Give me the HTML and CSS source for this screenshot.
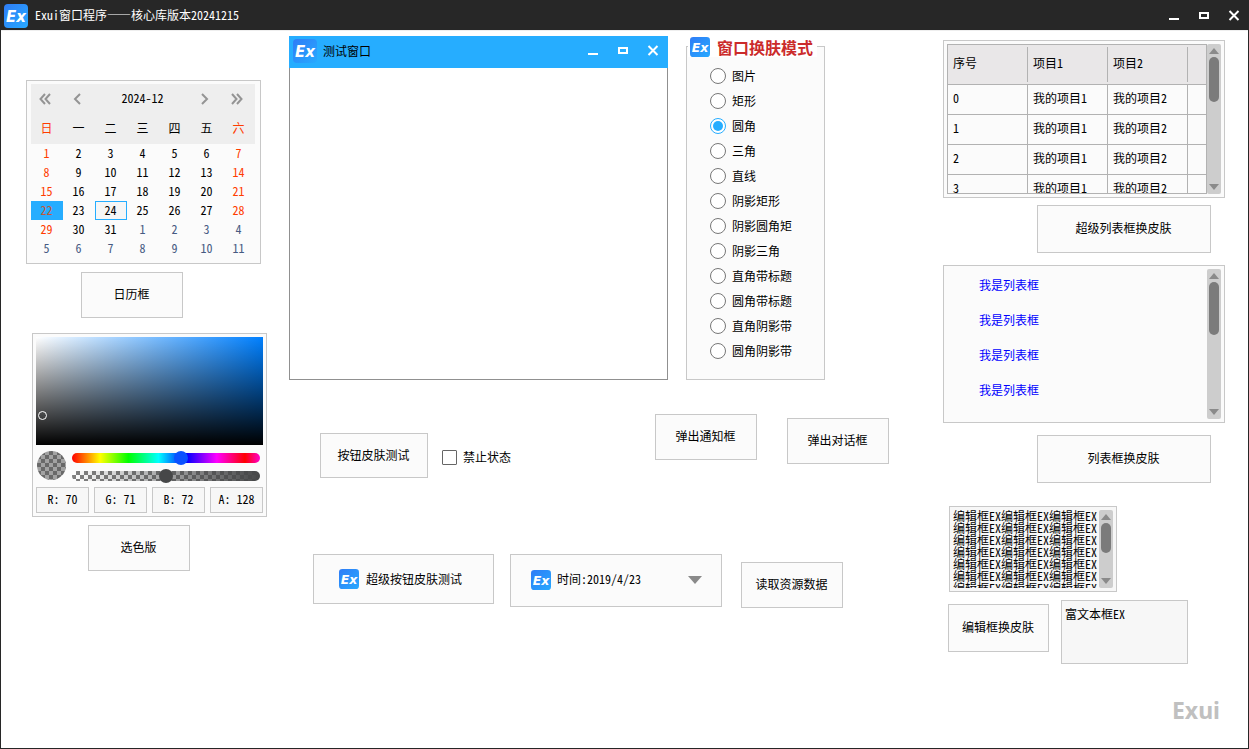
FILE: index.html
```html
<!DOCTYPE html>
<html lang="zh-CN">
<head>
<meta charset="utf-8">
<title>Exui窗口程序</title>
<link rel="stylesheet" href="styles.css">
<script src="app.js" defer></script>
</head>
<body>
<svg class="defs" aria-hidden="true">
  <defs>
    <linearGradient id="logo-fill" x1="0" y1="0" x2="1" y2="1">
      <stop offset="0" stop-color="#2f7cf6"/><stop offset="1" stop-color="#27a9ff"/>
    </linearGradient>
    <symbol id="logo" viewBox="0 0 24 24">
      <rect width="24" height="24" rx="4" fill="url(#logo-fill)"/>
      <text x="2" y="18" class="logo-text">Ex</text>
    </symbol>
    <symbol id="win-min" viewBox="0 0 12 12"><path d="M1 9h10" stroke="#fff" stroke-width="2"/></symbol>
    <symbol id="win-max" viewBox="0 0 12 12"><path d="M2 3h8v5H2z" fill="none" stroke="#fff" stroke-width="2"/></symbol>
    <symbol id="win-close" viewBox="0 0 12 12"><path d="M1.500 1l9 9m0-9l-9 9" stroke="#fff" stroke-width="2"/></symbol>
    <symbol id="tri-up" viewBox="0 0 10 6"><path d="M5 0l5 6H0z" fill="#8a8a8a"/></symbol>
    <symbol id="tri-down" viewBox="0 0 10 6"><path d="M5 6L0 0h10z" fill="#8a8a8a"/></symbol>
    <symbol id="chev" viewBox="0 0 12 12"><path d="M9 1L4 6l5 5" fill="none" stroke="#949494" stroke-width="2"/></symbol>
    <symbol id="chev2" viewBox="0 0 12 12"><path d="M6 1L1.500 6L6 11M11 1L6.500 6L11 11" fill="none" stroke="#949494" stroke-width="2"/></symbol>
  </defs>
</svg>

<header class="titlebar">
  <svg class="logo-lg"><use href="#logo"/></svg>
  <h1 class="title">Exui窗口程序——核心库版本20241215</h1>
  <div class="controls">
    <button class="ctl" aria-label="最小化"><svg class="ctl-icon"><use href="#win-min"/></svg></button>
    <button class="ctl" aria-label="最大化"><svg class="ctl-icon"><use href="#win-max"/></svg></button>
    <button class="ctl" aria-label="关闭"><svg class="ctl-icon"><use href="#win-close"/></svg></button>
  </div>
</header>

<main class="main">
  <section class="col-left">
    <div class="calendar">
      <div class="cal-nav">
        <button class="cal-btn" aria-label="上一年"><svg class="cal-icon"><use href="#chev2"/></svg></button>
        <button class="cal-btn" aria-label="上一月"><svg class="cal-icon"><use href="#chev"/></svg></button>
        <span class="cal-title">2024-12</span>
        <button class="cal-btn" aria-label="下一月"><svg class="cal-icon flip"><use href="#chev"/></svg></button>
        <button class="cal-btn" aria-label="下一年"><svg class="cal-icon flip"><use href="#chev2"/></svg></button>
      </div>
      <table class="cal-table">
        <thead><tr><th class="hol">日</th><th>一</th><th>二</th><th>三</th><th>四</th><th>五</th><th class="hol">六</th></tr></thead>
        <tbody>
          <tr><td class="hol">1</td><td>2</td><td>3</td><td>4</td><td>5</td><td>6</td><td class="hol">7</td></tr>
          <tr><td class="hol">8</td><td>9</td><td>10</td><td>11</td><td>12</td><td>13</td><td class="hol">14</td></tr>
          <tr><td class="hol">15</td><td>16</td><td>17</td><td>18</td><td>19</td><td>20</td><td class="hol">21</td></tr>
          <tr><td class="hol selected">22</td><td>23</td><td class="today">24</td><td>25</td><td>26</td><td>27</td><td class="hol">28</td></tr>
          <tr><td class="hol">29</td><td>30</td><td>31</td><td class="other">1</td><td class="other">2</td><td class="other">3</td><td class="other">4</td></tr>
          <tr><td class="other">5</td><td class="other">6</td><td class="other">7</td><td class="other">8</td><td class="other">9</td><td class="other">10</td><td class="other">11</td></tr>
        </tbody>
      </table>
    </div>
    <button class="btn btn-cal">日历框</button>

    <div class="picker">
      <div class="sv"><span class="sv-dot"></span></div>
      <div class="sliders">
        <div class="preview"></div>
        <div class="ranges">
          <input class="range hue" type="range" min="0" max="1000" value="586" aria-label="色相">
          <input class="range alpha" type="range" min="0" max="255" value="128" aria-label="透明度">
        </div>
      </div>
      <div class="channels">
        <input class="chan" value="R: 70" aria-label="R">
        <input class="chan" value="G: 71" aria-label="G">
        <input class="chan" value="B: 72" aria-label="B">
        <input class="chan" value="A: 128" aria-label="A">
      </div>
    </div>
    <button class="btn btn-color">选色版</button>
  </section>

  <section class="col-mid">
    <div class="row-top">
      <div class="window">
        <div class="window-bar">
          <svg class="logo-lg"><use href="#logo"/></svg>
          <h2 class="window-title">测试窗口</h2>
          <div class="controls">
            <button class="ctl" aria-label="最小化"><svg class="ctl-icon"><use href="#win-min"/></svg></button>
            <button class="ctl" aria-label="最大化"><svg class="ctl-icon"><use href="#win-max"/></svg></button>
            <button class="ctl" aria-label="关闭"><svg class="ctl-icon"><use href="#win-close"/></svg></button>
          </div>
        </div>
      </div>
      <fieldset class="group">
        <legend class="legend"><svg class="logo-sm"><use href="#logo"/></svg>窗口换肤模式</legend>
        <label class="opt"><input class="radio" type="radio" name="skin">图片</label>
        <label class="opt"><input class="radio" type="radio" name="skin">矩形</label>
        <label class="opt"><input class="radio" type="radio" name="skin" checked>圆角</label>
        <label class="opt"><input class="radio" type="radio" name="skin">三角</label>
        <label class="opt"><input class="radio" type="radio" name="skin">直线</label>
        <label class="opt"><input class="radio" type="radio" name="skin">阴影矩形</label>
        <label class="opt"><input class="radio" type="radio" name="skin">阴影圆角矩</label>
        <label class="opt"><input class="radio" type="radio" name="skin">阴影三角</label>
        <label class="opt"><input class="radio" type="radio" name="skin">直角带标题</label>
        <label class="opt"><input class="radio" type="radio" name="skin">圆角带标题</label>
        <label class="opt"><input class="radio" type="radio" name="skin">直角阴影带</label>
        <label class="opt"><input class="radio" type="radio" name="skin">圆角阴影带</label>
      </fieldset>
    </div>

    <div class="row-mid">
      <button class="btn btn-skin">按钮皮肤测试</button>
      <label class="check"><input class="checkbox" type="checkbox">禁止状态</label>
      <button class="btn btn-notice">弹出通知框</button>
      <button class="btn btn-dialog">弹出对话框</button>
    </div>

    <div class="row-bottom">
      <button class="btn btn-super"><svg class="logo-sm"><use href="#logo"/></svg>超级按钮皮肤测试</button>
      <div class="combo">
        <svg class="logo-sm"><use href="#logo"/></svg>
        <select class="combo-select" aria-label="时间"><option>时间:2019/4/23</option></select>
        <svg class="combo-arrow" viewBox="0 0 14 8"><path d="M0 0h14L7 8z" fill="#8a8a8a"/></svg>
      </div>
      <button class="btn btn-read">读取资源数据</button>
    </div>
  </section>

  <section class="col-right">
    <div class="panel">
      <div class="grid-view">
        <table class="grid-table">
          <thead><tr><th>序号</th><th>项目1</th><th>项目2</th><th></th></tr></thead>
          <tbody>
            <tr><td>0</td><td>我的项目1</td><td>我的项目2</td><td></td></tr>
            <tr><td>1</td><td>我的项目1</td><td>我的项目2</td><td></td></tr>
            <tr><td>2</td><td>我的项目1</td><td>我的项目2</td><td></td></tr>
            <tr><td>3</td><td>我的项目1</td><td>我的项目2</td><td></td></tr>
          </tbody>
        </table>
      </div>
      <div class="scroll"><svg class="tri"><use href="#tri-up"/></svg><span class="thumb thumb-grid"></span><svg class="tri tri-end"><use href="#tri-down"/></svg></div>
    </div>
    <button class="btn btn-wide btn-grid">超级列表框换皮肤</button>

    <div class="panel panel-list">
      <ul class="list"><li>我是列表框</li><li>我是列表框</li><li>我是列表框</li><li>我是列表框</li></ul>
      <div class="scroll"><svg class="tri"><use href="#tri-up"/></svg><span class="thumb thumb-list"></span><svg class="tri tri-end"><use href="#tri-down"/></svg></div>
    </div>
    <button class="btn btn-wide btn-list">列表框换皮肤</button>

    <div class="edit">
      <textarea class="edit-text" wrap="off" aria-label="编辑框">编辑框EX编辑框EX编辑框EX
编辑框EX编辑框EX编辑框EX
编辑框EX编辑框EX编辑框EX
编辑框EX编辑框EX编辑框EX
编辑框EX编辑框EX编辑框EX
编辑框EX编辑框EX编辑框EX
编辑框EX编辑框EX编辑框EX</textarea>
      <div class="scroll"><svg class="tri"><use href="#tri-up"/></svg><span class="thumb thumb-edit"></span><svg class="tri tri-end"><use href="#tri-down"/></svg></div>
    </div>
    <div class="row-edit">
      <button class="btn btn-edit">编辑框换皮肤</button>
      <textarea class="rich" aria-label="富文本框">富文本框EX</textarea>
    </div>
    <div class="brand">Exui</div>
  </section>
</main>
</body>
</html>
```

FILE: styles.css
```css
* { box-sizing: border-box; }

body, button, input, select, textarea {
  font-family: "Noto Sans Mono CJK SC", "Liberation Mono", "Noto Sans CJK SC", monospace;
  font-size: 12px;
  line-height: 16px;
  color: #000;
}

body {
  margin: 0;
  min-height: 100vh;
  background: #fff;
  border: 1px solid #272727;
  border-top: 0;
}

button { padding: 0; border: 0; background: none; }
h1, h2 { margin: 0; font-size: 12px; font-weight: 400; }
svg { display: block; flex: none; }
.defs { position: absolute; width: 0; height: 0; }

.logo-lg { width: 24px; height: 24px; }
.logo-sm { width: 20px; height: 20px; }
.logo-text {
  font-family: "DejaVu Sans", sans-serif;
  font-size: 15px;
  font-weight: 700;
  font-style: italic;
  fill: #fff;
}

/* Title bars */
.titlebar {
  display: flex;
  align-items: center;
  height: 30px;
  padding: 1px 0 0 3px;
  background: #272727;
}
.title { margin-left: 7px; padding-bottom: 2px; color: #fff; }
.controls { display: flex; margin-left: auto; }
.titlebar .controls { margin-right: -1px; }
.ctl { display: grid; place-items: center; width: 30px; height: 28px; }
.ctl-icon { width: 12px; height: 12px; }

.main {
  display: grid;
  grid-template-columns: 241px 1fr 282px;
  column-gap: 22px;
  padding: 0 23px 0 25px;
  border-top: 1px solid #eee;
}

.btn {
  display: flex;
  align-items: center;
  justify-content: center;
  width: 102px;
  height: 46px;
  padding: 0 1px 2px 0;
  border: 1px solid #c8c8c8;
  background: #fbfbfb;
}

/* Left column */
.col-left {
  display: flex;
  flex-direction: column;
  align-items: flex-start;
  padding-top: 49px;
}
.calendar {
  width: 235px;
  padding: 3px 5px 5px 4px;
  border: 1px solid #c8c8c8;
  background: #fbfbfb;
}
.cal-nav {
  display: grid;
  grid-template-columns: 32px 32px 1fr 32px 32px;
  align-items: center;
  height: 29px;
  background: #eee;
}
.cal-btn { display: grid; place-items: center; height: 28px; padding-right: 4px; }
.cal-icon { width: 12px; height: 12px; }
.flip { transform: scaleX(-1); }
.cal-title { padding: 0 1px 2px 0; text-align: center; }
.cal-table { width: 100%; border-collapse: collapse; table-layout: fixed; text-align: center; }
.cal-table th { height: 31px; padding: 0 1px 2px 0; background: #eee; font-weight: 400; }
.cal-table td { height: 19px; padding: 0 1px 2px 0; line-height: 16px; }
.cal-table .hol { color: #ff3c00; }
.cal-table .other { color: #465a82; }
.cal-table .selected { background: #26adff; color: #c25a3c; }
.cal-table .today { outline: 1px solid #26adff; outline-offset: -1px; background: #f6f6f6; }
.btn-cal { margin: 8px 0 0 55px; }

.picker {
  width: 235px;
  margin: 15px 0 0 6px;
  padding: 3px;
  border: 1px solid #c8c8c8;
  background: #fbfbfb;
}
.sv {
  position: relative;
  height: 108px;
  background:
    linear-gradient(to bottom, transparent, #000),
    linear-gradient(to right, #fff, #0080ff);
}
.sv-dot {
  position: absolute;
  left: 2px;
  top: 74px;
  width: 9px;
  height: 9px;
  border: 1px solid #fff;
  border-radius: 50%;
}
.sliders { display: flex; gap: 6px; height: 42px; padding: 6px 3px 0 1px; }
.preview {
  width: 29px;
  height: 29px;
  border-radius: 50%;
  background: repeating-conic-gradient(#696969 0 25%, #a2a2a2 0 50%) 0 0 / 8px 8px;
}
.ranges { display: flex; flex: 1; flex-direction: column; gap: 4px; }
.range {
  appearance: none;
  width: 100%;
  height: 14px;
  margin: 0;
  background: none;
}
.range::-webkit-slider-runnable-track { height: 10px; border-radius: 5px; }
.range::-webkit-slider-thumb {
  appearance: none;
  width: 14px;
  height: 14px;
  margin-top: -2px;
  border-radius: 50%;
}
.hue::-webkit-slider-runnable-track {
  background: linear-gradient(to right, #f00, #ff0 15%, #0f0 30%, #0ff 46%, #00f 61%, #f0f 77%, #f00 92%, #f0c);
}
.hue::-webkit-slider-thumb { background: #0a50ff; }
.alpha::-webkit-slider-runnable-track {
  background:
    linear-gradient(to right, #46474800, #464748),
    repeating-conic-gradient(#808080 0 25%, #fff 0 50%) 0 0 / 8px 8px;
}
.alpha::-webkit-slider-thumb { background: #464748; }
.channels { display: grid; grid-template-columns: repeat(4, 1fr); gap: 5px; }
.chan {
  width: 100%;
  height: 26px;
  padding: 0 0 4px;
  border: 1px solid #c8c8c8;
  background: #f7f7f7;
  text-align: center;
}
.btn-color { margin: 8px 0 0 62px; }

/* Middle column */
.col-mid { padding-top: 5px; }
.row-top { display: flex; align-items: stretch; gap: 18px; padding-right: 96px; }
.window {
  flex: 1;
  height: 344px;
  border: 1px solid #909090;
  border-top: 0;
}
.window-bar {
  display: flex;
  align-items: center;
  height: 32px;
  margin: 0 -1px;
  padding: 0 0 2px 4px;
  background: #26adff;
}
.window-title { margin-left: 6px; }
.group {
  width: 139px;
  margin: 0;
  padding: 6px 0 0 23px;
  border: 1px solid #c8c8c8;
  background: #fbfbfb;
}
.legend {
  display: flex;
  align-items: center;
  gap: 7px;
  height: 21px;
  margin-left: -22px;
  padding: 0 4px 0 2px;
  background: #fff;
  color: #cb2b2b;
  font-size: 16px;
  font-weight: 700;
}
.opt { display: flex; align-items: center; gap: 6px; height: 25px; }
.radio {
  appearance: none;
  display: grid;
  place-items: center;
  width: 16px;
  height: 16px;
  margin: 0;
  border: 1px solid #777;
  border-radius: 50%;
  background: #fff;
}
.radio:checked { border-color: #26adff; }
.radio:checked::after {
  content: "";
  width: 10px;
  height: 10px;
  border-radius: 50%;
  background: #26adff;
}

.row-mid { display: flex; align-items: flex-start; padding: 34px 32px 0 31px; }
.btn-skin { width: 108px; height: 45px; margin-top: 19px; }
.check { display: flex; align-items: center; gap: 6px; margin: 35px auto 0 14px; }
.checkbox {
  appearance: none;
  width: 15px;
  height: 15px;
  margin: 0;
  border: 1px solid #666;
  border-radius: 1px;
  background: #fff;
}
.btn-dialog { margin: 4px 0 0 30px; }

.row-bottom { display: flex; align-items: flex-start; padding: 76px 78px 0 24px; }
.btn-super { gap: 7px; width: 181px; height: 50px; padding: 0 6px 0 0; }
.combo {
  display: flex;
  flex: 1;
  align-items: center;
  height: 53px;
  margin: 0 19px 0 16px;
  padding: 0 19px 2px 20px;
  border: 1px solid #c8c8c8;
  background: #fbfbfb;
}
.combo-select {
  appearance: none;
  flex: 1;
  min-width: 0;
  padding: 0 6px 2px;
  border: 0;
  background: none;
}
.combo-arrow { width: 14px; height: 8px; }
.btn-read { margin-top: 8px; }

/* Right column */
.col-right { display: flex; flex-direction: column; padding-top: 9px; }
.panel {
  display: flex;
  height: 158px;
  padding: 3px;
  border: 1px solid #c8c8c8;
  background: #fbfbfb;
}
.grid-view { flex: 1; overflow: hidden; border: 1px solid #b2b2b2; }
.grid-table { width: 100%; border-collapse: separate; border-spacing: 0; table-layout: fixed; }
.grid-table th, .grid-table td {
  width: 80px;
  padding: 0 5px 4px;
  border-bottom: 1px solid #b2b2b2;
  text-align: left;
  font-weight: 400;
  white-space: nowrap;
}
.grid-table th { height: 40px; background: linear-gradient(#b2b2b2, #b2b2b2) right center / 1px 35px no-repeat #e9e7e8; }
.grid-table td { height: 30px; border-right: 1px solid #b2b2b2; }
.grid-table th:last-child, .grid-table td:last-child { width: auto; border-right: 0; }
.grid-table th:last-child { background: #e9e7e8; }

.scroll {
  display: flex;
  flex-direction: column;
  align-items: center;
  width: 14px;
  padding: 4px 0;
  border-radius: 2px;
  background: #cdcdcd;
}
.tri { width: 10px; height: 6px; }
.tri-end { margin-top: auto; }
.thumb { width: 10px; margin-top: 3px; border-radius: 5px; background: #7b7b7b; }
.thumb-grid { height: 45px; }
.thumb-list { height: 53px; }
.thumb-edit { height: 30px; }

.btn-wide { align-self: flex-end; width: 174px; height: 48px; margin-right: 14px; }
.btn-grid { margin-top: 7px; }
.btn-list { margin-top: 12px; }
.panel-list { margin-top: 12px; }
.list { flex: 1; margin: 0; padding: 0 0 0 32px; list-style: none; color: #00f; }
.list li { height: 35px; line-height: 32px; }

.edit {
  display: flex;
  width: 168px;
  height: 86px;
  margin: 23px 0 0 6px;
  padding: 3px;
  border: 1px solid #c8c8c8;
  background: #f7f7f7;
}
.edit-text {
  flex: 1;
  min-width: 0;
  padding: 0;
  border: 0;
  background: none;
  line-height: 12px;
  overflow: hidden;
  resize: none;
}
.row-edit { display: flex; align-items: flex-start; gap: 12px; margin: 8px 0 0 5px; }
.btn-edit { width: 101px; height: 48px; margin-top: 4px; }
.rich {
  width: 127px;
  height: 64px;
  padding: 5px 3px;
  border: 1px solid #c8c8c8;
  background: #f7f7f7;
  overflow: hidden;
  resize: none;
}
.brand {
  margin: 34px 5px 0 0;
  color: #c0c0c0;
  font-family: "Noto Sans", sans-serif;
  font-size: 23px;
  font-weight: 700;
  line-height: 24px;
  text-align: right;
}
```

FILE: app.js
```js
document.querySelectorAll('.cal-table td').forEach(function (cell) {
  cell.addEventListener('click', function () {
    document.querySelectorAll('.cal-table .selected').forEach(function (c) {
      c.classList.remove('selected');
    });
    cell.classList.add('selected');
  });
});
```
